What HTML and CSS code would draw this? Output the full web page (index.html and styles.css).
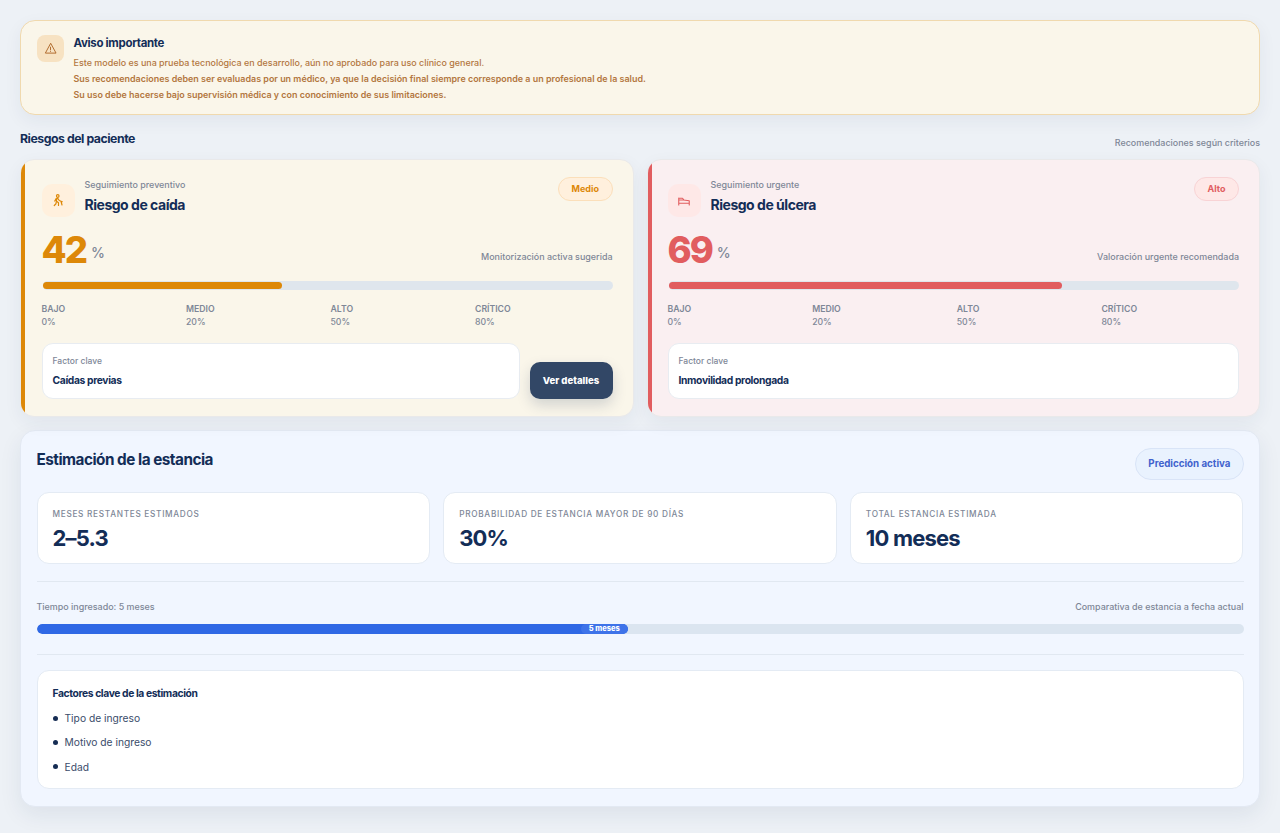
FILE: index.html
```html
<!DOCTYPE html>
<html lang="es">

<head>
  <meta charset="UTF-8" />
  <meta name="viewport" content="width=device-width, initial-scale=1.0" />
  <title>Riesgos del paciente</title>
  <link rel="stylesheet" href="styles.css">
</head>

<body>

  <main class="page">

    <!-- Aviso -->
    <section class="notice">
      <div class="notice-icon">
        <svg width="13" height="13" viewBox="0 0 24 24" fill="none" stroke="currentColor" stroke-width="1.8" stroke-linecap="round" stroke-linejoin="round">
          <path d="M12 3 2.5 20.5h19z" />
          <path d="M12 9.5v5M12 17.2v.2" />
        </svg>
      </div>
      <div>
        <h2 class="notice-title">Aviso importante</h2>
        <p class="notice-text">Este modelo es una prueba tecnológica en desarrollo, aún no aprobado para uso clínico general.</p>
        <p class="notice-text strong">Sus recomendaciones deben ser evaluadas por un médico, ya que la decisión final siempre corresponde a un profesional de la salud.</p>
        <p class="notice-text strong">Su uso debe hacerse bajo supervisión médica y con conocimiento de sus limitaciones.</p>
      </div>
    </section>

    <div class="section-head">
      <h2 class="section-title">Riesgos del paciente</h2>
      <span class="hint">Recomendaciones según criterios</span>
    </div>

    <!-- Tarjetas de riesgo -->
    <section class="risks">
      <article class="risk medium">
        <header class="risk-head">
          <div class="risk-icon">
            <svg width="11" height="13" viewBox="0 0 22 26" fill="none" stroke="currentColor" stroke-width="2.4" stroke-linecap="round" stroke-linejoin="round">
              <circle cx="9.5" cy="4" r="2.6" />
              <path d="M8 8.5 6.5 14l4.500 3.500V23M9.500 8.500l3 4.500 6 2.500M6.500 15.500 6 19.500 2.500 23M6 9.500 3.500 14M16 14.500l2 7.500" />
            </svg>
          </div>
          <div class="risk-names">
            <p class="hint">Seguimiento preventivo</p>
            <h3 class="risk-title">Riesgo de caída</h3>
          </div>
          <span class="badge">Medio</span>
        </header>
        <div class="score">
          <div class="score-value"><strong>42</strong><span>%</span></div>
          <span class="hint score-hint">Monitorización activa sugerida</span>
        </div>
        <div class="bar"><div class="bar-fill" style="width: 42%"></div></div>
        <div class="scale">
          <div><b>BAJO</b><span>0%</span></div>
          <div><b>MEDIO</b><span>20%</span></div>
          <div><b>ALTO</b><span>50%</span></div>
          <div><b>CRÍTICO</b><span>80%</span></div>
        </div>
        <footer class="risk-foot">
          <div class="factor">
            <p class="factor-label">Factor clave</p>
            <p class="factor-name">Caídas previas</p>
          </div>
          <button class="details">Ver detalles</button>
        </footer>
      </article>

      <article class="risk high">
        <header class="risk-head">
          <div class="risk-icon">
            <svg width="14" height="12" viewBox="0 0 28 24" fill="none" stroke="currentColor" stroke-width="2.2" stroke-linecap="round" stroke-linejoin="round">
              <path d="M3.5 6v14M3.500 16.500h21M24.500 20v-8.500L13 10H3.500M3.500 6.500H11L14 10" />
            </svg>
          </div>
          <div class="risk-names">
            <p class="hint">Seguimiento urgente</p>
            <h3 class="risk-title">Riesgo de úlcera</h3>
          </div>
          <span class="badge">Alto</span>
        </header>
        <div class="score">
          <div class="score-value"><strong>69</strong><span>%</span></div>
          <span class="hint score-hint">Valoración urgente recomendada</span>
        </div>
        <div class="bar"><div class="bar-fill" style="width: 69%"></div></div>
        <div class="scale">
          <div><b>BAJO</b><span>0%</span></div>
          <div><b>MEDIO</b><span>20%</span></div>
          <div><b>ALTO</b><span>50%</span></div>
          <div><b>CRÍTICO</b><span>80%</span></div>
        </div>
        <footer class="risk-foot">
          <div class="factor">
            <p class="factor-label">Factor clave</p>
            <p class="factor-name">Inmovilidad prolongada</p>
          </div>
        </footer>
      </article>
    </section>

    <!-- Estancia -->
    <section class="stay">
      <header class="stay-head">
        <h2 class="stay-title">Estimación de la estancia</h2>
        <span class="stay-badge">Predicción activa</span>
      </header>

      <div class="stats">
        <div class="stat">
          <p class="stat-label">Meses restantes estimados</p>
          <p class="stat-value">2–5.3</p>
        </div>
        <div class="stat">
          <p class="stat-label">Probabilidad de estancia mayor de 90 días</p>
          <p class="stat-value">30%</p>
        </div>
        <div class="stat">
          <p class="stat-label">Total estancia estimada</p>
          <p class="stat-value">10 meses</p>
        </div>
      </div>

      <div class="progress">
        <div class="progress-head">
          <span class="hint">Tiempo ingresado: 5 meses</span>
          <span class="hint">Comparativa de estancia a fecha actual</span>
        </div>
        <div class="progress-bar">
          <div class="progress-fill" style="width: 49%"><span class="progress-tag">5 meses</span></div>
        </div>
      </div>

      <div class="factors">
        <h3 class="factors-title">Factores clave de la estimación</h3>
        <ul class="factors-list">
          <li>Tipo de ingreso</li>
          <li>Motivo de ingreso</li>
          <li>Edad</li>
        </ul>
      </div>
    </section>

  </main>

</body>

</html>
```

FILE: styles.css
```css
* {
  box-sizing: border-box;
}

body {
  margin: 0;
  min-height: 833px;
  font-family: Inter, 'Liberation Sans', sans-serif;
  color: #132d57;
  background: #edf1f6;
}

h2, h3, p, ul {
  margin: 0;
  padding: 0;
}

h2, h3 {
  font-weight: 700;
}

.page {
  padding: 20px 20px 26px;
}

.hint {
  font-size: 8.95px;
  line-height: 14px;
  font-weight: 500;
  color: #7e8797;
}

/* aviso */
.notice {
  display: flex;
  gap: 10px;
  height: 95px;
  padding: 14px 15.5px;
  border: 1px solid #f0d9ae;
  border-radius: 15px;
  background: #faf6ea;
  box-shadow: 0 6px 18px rgba(30, 50, 90, 0.06);
}

.notice-icon {
  display: flex;
  align-items: center;
  justify-content: center;
  width: 27px;
  height: 27px;
  border-radius: 8px;
  background: #f7e2c2;
  color: #b06a2c;
}

.notice-title {
  font-size: 11.5px;
  line-height: 15px;
  letter-spacing: -0.33px;
  margin: 1px 0 4px;
}

.notice-text {
  font-size: 8.95px;
  line-height: 16px;
  font-weight: 500;
  color: #b3763f;
}

.notice-text.strong {
  font-weight: 600;
}

/* riesgos */
.section-head {
  display: flex;
  justify-content: space-between;
  align-items: flex-end;
  height: 35px;
}

.section-title {
  font-size: 12.3px;
  line-height: 16px;
  letter-spacing: -0.47px;
  margin-bottom: 3px;
}

.risks {
  display: grid;
  grid-template-columns: 1fr 1fr;
  gap: 13px;
  margin-top: 9px;
}

.risk {
  position: relative;
  overflow: hidden;
  height: 258px;
  padding: 18px 20px 17px;
  border: 1px solid #e9e9ea;
  border-radius: 14px;
  box-shadow: 0 6px 18px rgba(30, 50, 90, 0.06);
}

.risk::before {
  content: "";
  position: absolute;
  left: -1px;
  top: 0;
  bottom: 0;
  width: 5px;
  background: var(--tone);
}

.risk.medium {
  --tone: #dd8808;
  --soft: #fff0dd;
  --line: #fbdfba;
  padding-left: 20.5px;
  background: #faf6ea;
}

.risk.high {
  --tone: #e15d5f;
  --soft: #fee8e7;
  --line: #f8d3d5;
  background: #faeff1;
}

.risk-head {
  display: flex;
  align-items: flex-start;
  height: 52px;
}

.risk-icon {
  display: flex;
  align-items: center;
  justify-content: center;
  width: 33px;
  height: 33px;
  margin-top: 6px;
  border-radius: 10px;
  background: var(--soft);
  color: var(--tone);
}

.risk-names {
  flex: 1;
  margin-left: 10px;
}

.risk-title {
  font-size: 14px;
  line-height: 18px;
  letter-spacing: -0.48px;
  margin-top: 4px;
}

.badge {
  height: 24px;
  margin-top: -1px;
  padding: 0 12.5px;
  border: 1px solid var(--line);
  border-radius: 12px;
  background: var(--soft);
  color: var(--tone);
  font-size: 9px;
  line-height: 22px;
  font-weight: 700;
}

.score {
  display: flex;
  justify-content: space-between;
  height: 51px;
}

.score-value {
  display: flex;
  gap: 5px;
  line-height: 40px;
}

.score-value strong {
  font-size: 36.5px;
  font-weight: 800;
  letter-spacing: -2px;
  color: var(--tone);
}

.score-value span {
  font-size: 14px;
  line-height: 45px;
  font-weight: 500;
  color: #7e8797;
}

.score-hint {
  margin-top: 20px;
}

.bar {
  height: 9px;
  margin-left: 1px;
  padding: 1px 0;
  border-radius: 5px;
  background: #dfe6ed;
}

.bar-fill {
  height: 7px;
  border-radius: 4px;
  background: var(--tone);
}

.scale {
  display: grid;
  grid-template-columns: repeat(4, 1fr);
  gap: 7px;
  margin-top: 13px;
  font-size: 8.7px;
  line-height: 13px;
  color: #7e8797;
}

.scale b,
.scale span {
  display: block;
}

.scale b {
  font-weight: 600;
}

.scale span {
  font-weight: 500;
}

.risk-foot {
  display: flex;
  align-items: flex-end;
  gap: 10px;
  margin-top: 14px;
}

.factor {
  flex: 1;
  height: 56px;
  padding: 10px;
  border: 1px solid #e8ecf1;
  border-radius: 11px;
  background: #fff;
}

.factor-label {
  font-size: 8.5px;
  line-height: 14px;
  font-weight: 500;
  color: #7e8797;
}

.factor-name {
  margin-top: 5px;
  font-size: 10.3px;
  line-height: 15px;
  font-weight: 700;
  letter-spacing: -0.36px;
}

.details {
  width: 83px;
  height: 37px;
  padding: 0;
  border: none;
  border-radius: 10px;
  background: #324766;
  color: #fff;
  font-family: inherit;
  font-size: 9.6px;
  font-weight: 800;
  box-shadow: 0 6px 14px rgba(30, 50, 90, 0.18);
}

/* estancia */
.stay {
  height: 377px;
  margin-top: 13px;
  padding: 17px 15.5px 18px;
  border: 1px solid #e3e9f3;
  border-radius: 15px;
  background: #f1f6ff;
  box-shadow: 0 8px 22px rgba(30, 50, 90, 0.08);
}

.stay-head {
  display: flex;
  justify-content: space-between;
  align-items: flex-start;
}

.stay-title {
  font-size: 15.3px;
  line-height: 22px;
  letter-spacing: -0.5px;
  margin-top: 1px;
}

.stay-badge {
  height: 32px;
  padding: 0 12px;
  border: 1px solid #d9e4f7;
  border-radius: 16px;
  background: #e9f2fe;
  color: #4162cd;
  font-size: 9.75px;
  line-height: 30px;
  font-weight: 700;
}

.stats {
  display: grid;
  grid-template-columns: repeat(3, 1fr);
  gap: 13px;
  margin-top: 12px;
}

.stat {
  height: 72px;
  padding: 14px 15px;
  border: 1px solid #e4ebf4;
  border-radius: 12px;
  background: #fff;
}

.stat-label {
  font-size: 8.25px;
  line-height: 14px;
  font-weight: 500;
  letter-spacing: 0.7px;
  text-transform: uppercase;
  color: #7e8797;
}

.stat-value {
  margin-top: 3px;
  font-size: 22px;
  line-height: 28px;
  font-weight: 700;
  letter-spacing: -0.8px;
}

.progress {
  height: 74px;
  margin-top: 17px;
  padding-top: 18px;
  border-top: 1px solid #e1e8f1;
  border-bottom: 1px solid #e1e8f1;
}

.progress-head {
  display: flex;
  justify-content: space-between;
}

.progress-bar {
  height: 10px;
  margin-top: 10px;
  border-radius: 5px;
  background: #dbe5f0;
  overflow: hidden;
}

.progress-fill {
  display: flex;
  justify-content: flex-end;
  height: 10px;
  border-radius: 5px;
  background: #2f68e5;
  overflow: hidden;
}

.progress-tag {
  padding: 0 8px;
  border-radius: 5px;
  background: #3e73e9;
  color: #fff;
  font-size: 7.5px;
  line-height: 10px;
  font-weight: 800;
}

.factors {
  height: 119px;
  margin-top: 15px;
  padding: 14px 15px;
  border: 1px solid #e4ebf4;
  border-radius: 12px;
  background: #fff;
}

.factors-title {
  font-size: 10.3px;
  line-height: 16px;
  letter-spacing: -0.39px;
}

.factors-list {
  list-style: none;
  margin-top: 5px;
}

.factors-list li {
  display: flex;
  align-items: center;
  gap: 7px;
  height: 24.3px;
  font-size: 10.25px;
  color: #3a4c6a;
}

.factors-list li::before {
  content: "";
  width: 5px;
  height: 5px;
  border-radius: 50%;
  background: #162d54;
}
```
